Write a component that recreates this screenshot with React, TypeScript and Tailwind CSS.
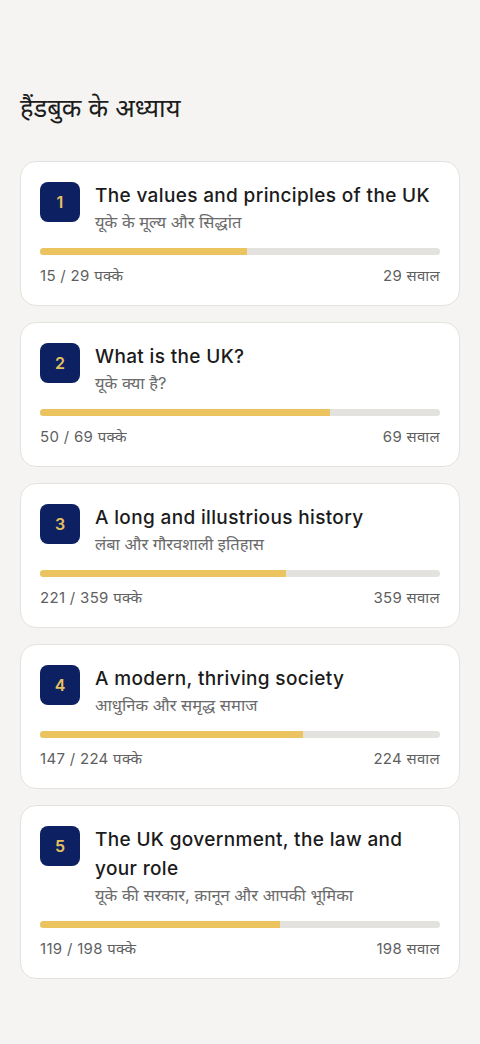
import React from 'react';

const chapters = [
  { n: 1, title: 'The values and principles of the UK', hi: 'यूके के मूल्य और सिद्धांत', done: 15, total: 29 },
  { n: 2, title: 'What is the UK?', hi: 'यूके क्या है?', done: 50, total: 69 },
  { n: 3, title: 'A long and illustrious history', hi: 'लंबा और गौरवशाली इतिहास', done: 221, total: 359 },
  { n: 4, title: 'A modern, thriving society', hi: 'आधुनिक और समृद्ध समाज', done: 147, total: 224 },
  { n: 5, title: 'The UK government, the law and your role', hi: 'यूके की सरकार, क़ानून और आपकी भूमिका', done: 119, total: 198 },
];

export default function App() {
  return (
    <div className="min-h-[1044px] bg-[#f5f4f2] px-5 pt-[90px] pb-10 font-['Inter','Noto_Sans',sans-serif]">
      <h1 className="text-[25.5px] leading-[36px] text-[#1c1c1c] mb-[35px]">हैंडबुक के अध्याय</h1>
      <div className="flex flex-col gap-4">
        {chapters.map((c) => (
          <div key={c.n} className="bg-white rounded-2xl border border-[#e4e2de] px-[19px] pt-5 pb-[18px]">
            <div className="flex gap-[15px]">
              <div className="w-10 h-10 shrink-0 rounded-lg bg-[#0c2062] flex items-center justify-center text-[#e6c160] text-[16px] font-semibold">
                {c.n}
              </div>
              <div className="flex-1 min-w-0 -mt-[1px]">
                <div className="text-[19px] leading-[29px] font-medium text-[#1b1b1b] tracking-[0.35px]">{c.title}</div>
                <div className="text-[16.5px] leading-[24px] text-[#6b6b6b]">{c.hi}</div>
              </div>
            </div>
            <div className="mt-[14px] h-[7px] rounded-full bg-[#e3e2de] overflow-hidden">
              <div className="h-full bg-[#ecc45f]" style={{ width: `${(c.done / c.total) * 100}%` }} />
            </div>
            <div className="mt-[10px] flex justify-between text-[15px] leading-[22px] text-[#5f5f5f] tracking-[0.3px]">
              <span>{c.done} / {c.total} पक्के</span>
              <span>{c.total} सवाल</span>
            </div>
          </div>
        ))}
      </div>
    </div>
  );
}
